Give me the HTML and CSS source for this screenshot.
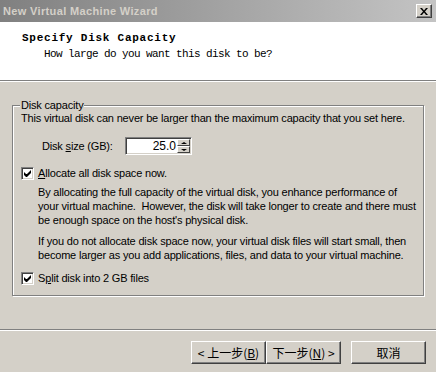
FILE: index.html
```html
<!DOCTYPE html>
<html lang="en">
<head>
    <meta charset="UTF-8">
    <title>New Virtual Machine Wizard</title>
    <link rel="stylesheet" href="styles.css">
</head>
<body>
    <div class="window">
        <div class="titlebar">
            <div class="title-text">New Virtual Machine Wizard</div>
            <div class="close-btn">
                <svg width="8" height="7" viewBox="0 0 8 7">
                    <path d="M0 0h2l2 2.5 2-2.5h2l-3 3.5 3 3.5h-2l-2-2.5-2 2.5h-2l3-3.5z" fill="#000"/>
                </svg>
            </div>
        </div>

        <div class="header">
            <div class="header-title">Specify Disk Capacity</div>
            <div class="header-sub">How large do you want this disk to be?</div>
        </div>
        <div class="sep"></div>

        <div class="content">
            <div class="group">
                <div class="legend">Disk capacity</div>
                <div class="line">This virtual disk can never be larger than the maximum capacity that you set here.</div>

                <div class="size-row">
                    <span class="size-label">Disk <u>s</u>ize (GB):</span>
                    <div class="spin">
                        <div class="spin-field">25.0</div>
                        <div class="spin-btns">
                            <div class="spin-btn"><span class="tri-up"></span></div>
                            <div class="spin-btn"><span class="tri-down"></span></div>
                        </div>
                    </div>
                </div>

                <div class="check-row first">
                    <div class="checkbox">
                        <svg width="7" height="7" viewBox="0 0 7 7"><path d="M0 2v3l2 2h1l4-4v-3l-4 4h-1z" fill="#000"/></svg>
                    </div>
                    <span><u>A</u>llocate all disk space now.</span>
                </div>

                <div class="para p1">
                    By allocating the full capacity of the virtual disk, you enhance performance of<br>
                    your virtual machine.&nbsp; However, the disk will take longer to create and there must<br>
                    be enough space on the host's physical disk.
                </div>
                <div class="para p2">
                    If you do not allocate disk space now, your virtual disk files will start small, then<br>
                    become larger as you add applications, files, and data to your virtual machine.
                </div>

                <div class="check-row last">
                    <div class="checkbox">
                        <svg width="7" height="7" viewBox="0 0 7 7"><path d="M0 2v3l2 2h1l4-4v-3l-4 4h-1z" fill="#000"/></svg>
                    </div>
                    <span>S<u>p</u>lit disk into 2 GB files</span>
                </div>
            </div>
        </div>

        <div class="sep"></div>
        <div class="buttons">
            <div class="btn">&lt; 上一步(<u>B</u>)</div>
            <div class="btn">下一步(<u>N</u>) &gt;</div>
            <div class="btn cancel">取消</div>
        </div>
    </div>
</body>
</html>
```

FILE: styles.css
```css
* {
    margin: 0;
    padding: 0;
    box-sizing: border-box;
}

body {
    background: #d4d0c8;
    font-family: 'Liberation Sans', Arial, sans-serif;
    font-size: 11px;
    color: #000;
}

.window {
    width: 436px;
    height: 372px;
    display: flex;
    flex-direction: column;
}

.titlebar {
    height: 22px;
    background: linear-gradient(90deg, #808080, #c4c4c4);
    display: flex;
    align-items: center;
    justify-content: space-between;
    padding: 0 4px 0 3px;
}

.title-text {
    color: #d4d0c8;
    font-family: 'Liberation Sans', Arial, sans-serif;
    font-weight: bold;
    font-size: 11px;
    letter-spacing: 0.35px;
}

.close-btn {
    width: 16px;
    height: 14px;
    background: #d4d0c8;
    border: 1px solid;
    border-color: #fff #404040 #404040 #fff;
    box-shadow: inset -1px -1px 0 #808080;
    display: flex;
    align-items: center;
    justify-content: center;
}

.header {
    height: 58px;
    background: #fff;
    padding: 9px 0 0 22px;
    font-family: 'Liberation Mono', monospace;
    font-size: 11px;
}

.header-title {
    font-weight: bold;
    letter-spacing: 0.75px;
    line-height: 15px;
}

.header-sub {
    letter-spacing: -0.6px;
    line-height: 15px;
    margin: 1px 0 0 22px;
}

.sep {
    height: 2px;
    flex-shrink: 0;
    border-top: 1px solid #808080;
    border-bottom: 1px solid #fff;
}

.content {
    flex: 1;
    padding: 23px 12px 0 12px;
}

.group {
    position: relative;
    height: 191px;
    border: 1px solid #808080;
    box-shadow: inset 1px 1px 0 #fff, 1px 1px 0 #fff;
    padding: 6px 8px 0 8px;
    line-height: 13px;
    white-space: nowrap;
    letter-spacing: -0.18px;
}

.legend {
    position: absolute;
    top: -7px;
    left: 7px;
    padding: 0 1px;
    background: #d4d0c8;
    line-height: 13px;
}

.size-row {
    display: flex;
    align-items: center;
    margin: 12px 0 0 21px;
}

.size-label {
    width: 83px;
}

.spin {
    display: flex;
    height: 18px;
    width: 67px;
    border: 1px solid;
    border-color: #808080 #fff #fff #808080;
    box-shadow: inset 1px 1px 0 #404040, inset -1px -1px 0 #d4d0c8;
    background: #fff;
    padding: 2px;
}

.spin-field {
    flex: 1;
    text-align: right;
    font-size: 12px;
    line-height: 13px;
    padding-right: 1px;
    letter-spacing: 0;
}

.spin-btns {
    width: 13px;
    display: flex;
    flex-direction: column;
    margin: -1px -1px -1px 0;
}

.spin-btn {
    flex: 1;
    background: #d4d0c8;
    border: 1px solid;
    border-color: #fff #404040 #404040 #fff;
    display: flex;
    align-items: center;
    justify-content: center;
}

.tri-up,
.tri-down {
    width: 0;
    height: 0;
    border-left: 3px solid transparent;
    border-right: 3px solid transparent;
}

.tri-up {
    border-bottom: 2px solid #000;
}

.tri-down {
    border-top: 2px solid #000;
}

.check-row {
    display: flex;
    align-items: center;
    gap: 4px;
    height: 13px;
}

.check-row.first {
    margin-top: 12px;
}

.check-row.last {
    margin-top: 10px;
}

.checkbox {
    width: 13px;
    height: 13px;
    background: #fff;
    border: 1px solid;
    border-color: #808080 #fff #fff #808080;
    box-shadow: inset 1px 1px 0 #404040, inset -1px -1px 0 #d4d0c8;
    display: flex;
    align-items: center;
    justify-content: center;
}

.para {
    margin-left: 17px;
    line-height: 14px;
}

.para.p1 {
    margin-top: 5px;
}

.para.p2 {
    margin-top: 7px;
}

.buttons {
    height: 41px;
    flex-shrink: 0;
    display: flex;
    justify-content: flex-end;
    padding: 10px 10px 0 0;
}

.btn {
    width: 75px;
    height: 23px;
    border: 1px solid;
    border-color: #fff #404040 #404040 #fff;
    box-shadow: inset -1px -1px 0 #808080;
    display: flex;
    align-items: center;
    justify-content: center;
    font-family: 'Noto Sans CJK SC', sans-serif;
    font-size: 12px;
}

.btn.cancel {
    margin-left: 10px;
}
```
